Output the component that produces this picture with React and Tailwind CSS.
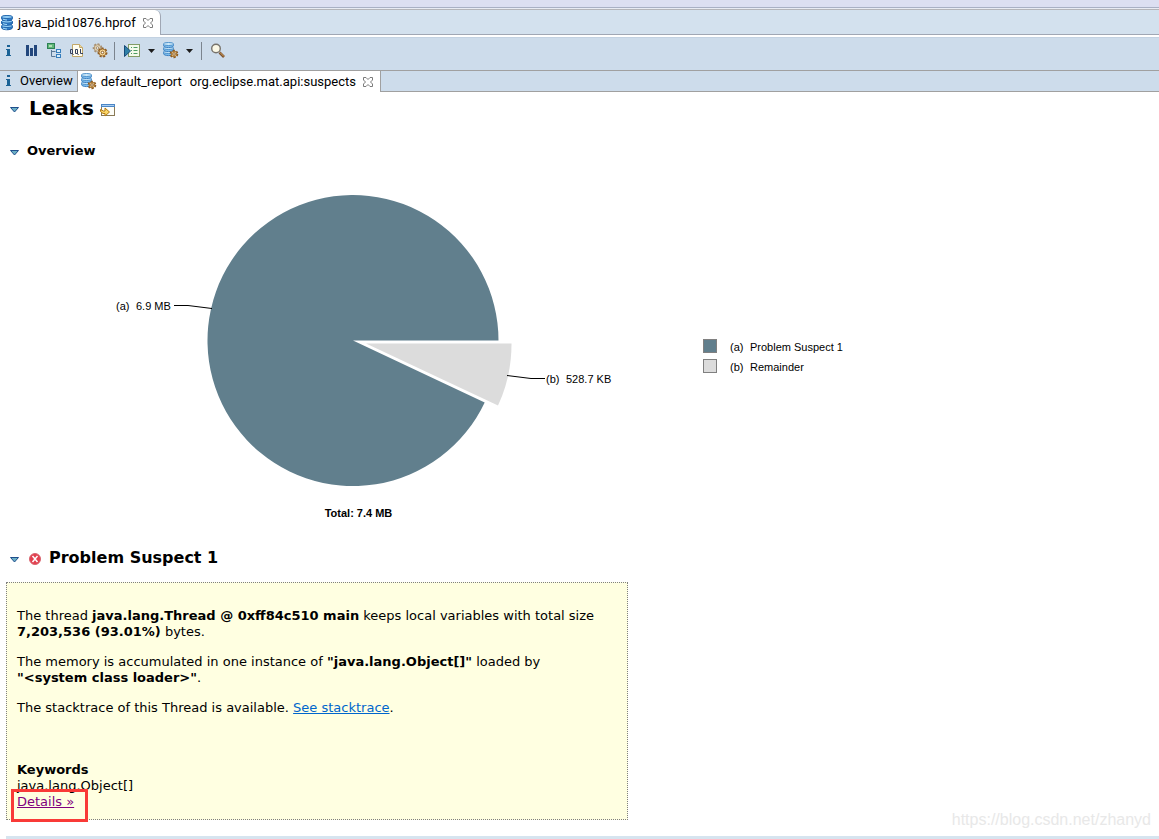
const uiFont = 'font-[Roboto,sans-serif]';

function DatabaseIcon() {
  return (
    <svg width="14" height="16" viewBox="0 0 14 16" className="shrink-0">
      {[11, 6.5, 2].map((y) => (
        <g key={y}>
          <path d={`M1.5 ${y}v1.500c0 3 11 3 11 0v-1.500z`} fill="#2f7ecb" stroke="#1d5fa6" />
          <ellipse cx="7" cy={y} rx="5.5" ry="1.600" fill="#8fcbf4" stroke="#2468ae" />
          <path d={`M3 ${y + 2.2}q2 .8 4 .8`} fill="none" stroke="#a8dcfa" />
        </g>
      ))}
    </svg>
  );
}

function InfoIcon() {
  return (
    <svg width="16" height="16" viewBox="0 0 16 16" className="shrink-0">
      <path d="M7 2h3v2H7zM6 6h4v6h1v1H6v-1h1V7H6z" fill="#1b6295" />
    </svg>
  );
}

function HistogramIcon() {
  return (
    <svg width="16" height="16" viewBox="0 0 16 16" className="shrink-0">
      <path d="M3 2h3v11H3zM7 5h3v8H7zM11 2h3v11h-3z" fill="#23477c" />
    </svg>
  );
}

function TreeIcon() {
  return (
    <svg width="16" height="16" viewBox="0 0 16 16" className="shrink-0">
      <path d="M5.500 7v6.500h4M5.500 8.500h4" fill="none" stroke="#5b7896" />
      <rect x="1.500" y="0.500" width="7" height="5" fill="#60b777" stroke="#2e8155" />
      <path d="M3 2h3v2H3z" fill="#b2dfb7" />
      <rect x="10.500" y="6.500" width="4" height="3" fill="#d9edfb" stroke="#357ebd" />
      <rect x="10.500" y="11.500" width="4" height="3" fill="#d9edfb" stroke="#357ebd" />
    </svg>
  );
}

function OqlIcon() {
  return (
    <svg width="16" height="16" viewBox="0 0 16 16" className="shrink-0">
      <path d="M3.500 1.500h7l3 3v9h-10z" fill="#fffdf0" stroke="#c2a768" />
      <path d="M10.500 1.500v3h3" fill="#ecd8a0" stroke="#c2a768" />
      <path
        d="M1.500 6.500h2v4h-2zM6.500 6.500h2v4h-2zM11.500 6v4.500h2.500M3 10l1.500 2M8 10l1.500 2"
        fill="none"
        stroke="#39435e"
      />
    </svg>
  );
}

function Gear({ x, y, r }) {
  return (
    <g transform={`translate(${x} ${y})`}>
      <circle r={r} fill="none" stroke="#8c5a20" strokeWidth="2" strokeDasharray="2 1.500" />
      <circle r={r - 0.5} fill="#f6d898" stroke="#a16d2b" />
      <circle r="1.300" fill="#fff" stroke="#8c5a20" />
    </g>
  );
}

function GearsIcon() {
  return (
    <svg width="16" height="16" viewBox="0 0 16 16" className="shrink-0">
      <g opacity="0.6">
        <Gear x={5.5} y={5} r={3.8} />
      </g>
      <Gear x={10.5} y={9.5} r={4} />
    </svg>
  );
}

function RunReportIcon() {
  return (
    <svg width="18" height="16" viewBox="0 0 18 16" className="shrink-0">
      <rect x="5.500" y="1.500" width="11" height="12" fill="#f4faeb" stroke="#839c66" />
      <path d="M8 4.500h1M8 7.500h1M8 10.500h1M10.500 4.500h4M10.500 7.500h4M10.500 10.500h4" stroke="#4c9c63" />
      <path d="M1.500 2.500v11l6-5.500z" fill="#2f80a7" stroke="#174a78" />
    </svg>
  );
}

function DatabaseGearIcon() {
  return (
    <svg width="17" height="17" viewBox="0 0 17 17" className="shrink-0">
      {[10, 6, 2].map((y) => (
        <g key={y}>
          <path d={`M1.500 ${y}v1.500c0 2.800 10 2.800 10 0v-1.500z`} fill="#7dbcec" stroke="#3f82c2" />
          <ellipse cx="6.500" cy={y} rx="5" ry="1.500" fill="#cde9fa" stroke="#4b90ca" />
        </g>
      ))}
      <Gear x={12} y={12} r={3.3} />
    </svg>
  );
}

function SearchIcon() {
  return (
    <svg width="16" height="16" viewBox="0 0 16 16" className="shrink-0">
      <path d="M9.500 9.500l4.500 4.500" stroke="#7a5230" strokeWidth="2.600" />
      <path d="M10 9.500l4 4" stroke="#d9a45c" />
      <circle cx="6" cy="5.500" r="4.300" fill="#fbf8e6" stroke="#77736c" strokeWidth="1.400" />
    </svg>
  );
}

function CloseIcon() {
  return (
    <svg width="12" height="12" viewBox="0 0 12 12" className="shrink-0">
      <path
        d="M1.500 1.500h2.500l2 2 2-2h2.500v2.500l-2 2 2 2v2.500h-2.500l-2-2-2 2h-2.500v-2.500l2-2-2-2z"
        fill="#fff"
        stroke="#7b7b7b"
      />
    </svg>
  );
}

function OpenPaneIcon() {
  return (
    <svg width="16" height="13" viewBox="0 0 16 13" className="shrink-0">
      <rect x="1.500" y="0.500" width="13" height="11" fill="#fdfdf8" stroke="#8a7a56" />
      <path d="M1 0h14v3H1z" fill="#4b86c6" />
      <path d="M2 1h12v1H2z" fill="#a9cdf0" />
      <path d="M0.500 5.500l3 1.500h1.500v-3l4.500 4-4.500 4v-2.500h-2l-2.500-2z" fill="#fbd667" stroke="#b27a14" />
    </svg>
  );
}

function ErrorIcon() {
  return (
    <svg width="12" height="12" viewBox="0 0 12 12" className="shrink-0">
      <circle cx="6" cy="6" r="5.500" fill="#e2404f" stroke="#d8656f" />
      <path d="M3.500 3l5 6M8.500 3l-5 6" stroke="#fff" strokeWidth="1.500" />
    </svg>
  );
}

function Twistie({ label }) {
  return (
    <button type="button" aria-label={label} className="flex w-[9px] shrink-0 pt-1">
      <svg width="9" height="6" viewBox="0 0 9 6">
        <path d="M0.500 0.500h8l-4 4.500z" fill="#6bb0c4" stroke="#1e4e8c" />
      </svg>
    </button>
  );
}

function ToolButton({ label, children }) {
  return (
    <button type="button" aria-label={label} className="flex shrink-0 items-center">
      {children}
    </button>
  );
}

function MenuArrow({ label }) {
  return (
    <ToolButton label={label}>
      <svg width="7" height="4" viewBox="0 0 7 4">
        <path d="M0 0h7l-3.500 4z" fill="#1c1c1c" />
      </svg>
    </ToolButton>
  );
}

function Toolbar() {
  return (
    <div className="flex h-[33px] items-center border-t border-[#c3d2e2] bg-[#cddceb] pb-[7px]">
      <div className="flex items-center gap-[7px]">
        <ToolButton label="Overview"><InfoIcon /></ToolButton>
        <ToolButton label="Histogram"><HistogramIcon /></ToolButton>
        <ToolButton label="Dominator tree"><TreeIcon /></ToolButton>
        <ToolButton label="OQL"><OqlIcon /></ToolButton>
        <ToolButton label="Thread overview"><GearsIcon /></ToolButton>
      </div>
      <span className="mx-[6px] h-[18px] w-px bg-[#7b848e]" />
      <div className="flex items-center gap-[7px] pl-[2px]">
        <ToolButton label="Run report"><RunReportIcon /></ToolButton>
        <MenuArrow label="Run report menu" />
        <ToolButton label="Query browser"><DatabaseGearIcon /></ToolButton>
        <MenuArrow label="Query browser menu" />
      </div>
      <span className="mx-2 h-[18px] w-px bg-[#7b848e]" />
      <ToolButton label="Find object"><SearchIcon /></ToolButton>
    </div>
  );
}

function EditorTabs() {
  return (
    <div className="flex h-[25px] bg-[#d3e1ee]">
      <div className="flex items-center rounded-tr-md border-r border-[#a0a7b4] bg-white pr-[6px]">
        <DatabaseIcon />
        <button type="button" className="mr-[6px] ml-1">java_pid10876.hprof</button>
        <ToolButton label="Close java_pid10876.hprof"><CloseIcon /></ToolButton>
      </div>
      <div className="flex-1 border-b border-[#a0a7b4]" />
    </div>
  );
}

function PageTabs() {
  return (
    <div className="flex h-[22px] border-t border-[#a0a0a0] bg-[#cddceb]">
      <button type="button" className="flex items-center gap-1 border-r border-b border-[#a0a0a0] pr-1">
        <InfoIcon />
        Overview
      </button>
      <div className="flex items-center border-r border-[#a0a0a0] bg-white pr-[6px] pl-[2px]">
        <DatabaseGearIcon />
        <button type="button" className="mr-[6px] ml-1 flex gap-2">
          <span>default_report</span>
          <span>org.eclipse.mat.api:suspects</span>
        </button>
        <ToolButton label="Close report"><CloseIcon /></ToolButton>
      </div>
      <div className="flex-1 border-b border-[#a0a0a0]" />
    </div>
  );
}

const legend = [
  { id: '(a)', name: 'Problem Suspect 1', swatch: 'bg-[#617f8d]' },
  { id: '(b)', name: 'Remainder', swatch: 'bg-[#dcdcdc]' },
];

function PieChart() {
  return (
    <div className="flex items-start font-['Liberation_Sans',sans-serif] text-[11px] leading-[14px] text-black">
      <svg width="640" height="350" viewBox="0 0 640 350" className="shrink-0">
        <path d="M353 165.500L498.500 165.500A145.500 145.500 0 1 0 484.700 227.400Z" fill="#617f8d" />
        <path d="M366 168.500L511.500 168.500A145.500 145.500 0 0 1 498 230.500Z" fill="#dcdcdc" />
        <path d="M174 130.500H188L212 133.500M507 200.500L531 203.500H545" fill="none" stroke="#000" />
        <text x="116" y="135">(a)</text>
        <text x="136" y="135">6.9 MB</text>
        <text x="546" y="208">(b)</text>
        <text x="566" y="208">528.7 KB</text>
        <text x="358.500" y="342" textAnchor="middle" fontWeight="bold">Total: 7.4 MB</text>
      </svg>
      <ul className="mt-[164px] ml-[63px] flex flex-col gap-[5px]">
        {legend.map((item) => (
          <li key={item.id} className="flex items-start">
            <span className={`h-[14px] w-[14px] border border-[#808080] ${item.swatch}`} />
            <span className="ml-[13px] w-5 pt-px">{item.id}</span>
            <span className="pt-px">{item.name}</span>
          </li>
        ))}
      </ul>
    </div>
  );
}

function SuspectDetails() {
  return (
    <div className="mx-[6px] max-w-[622px] border border-dotted border-[#808080] bg-[#ffffe1] px-[10px] pt-[25px] pb-[9px]">
      <p className="mb-[14px]">
        The thread <b>java.lang.Thread @ 0xff84c510 main</b> keeps local variables with total size{' '}
        <b>7,203,536 (93.01%)</b> bytes.
      </p>
      <p className="mb-[14px]">
        The memory is accumulated in one instance of <b>"java.lang.Object[]"</b> loaded by{' '}
        <b className="inline-block">"&lt;system class loader&gt;"</b>.
      </p>
      <p className="mb-[46px]">
        The stacktrace of this Thread is available.{' '}
        <a href="#stacktrace" className="text-[#0066cc] underline">See stacktrace</a>.
      </p>
      <p className="font-bold">Keywords</p>
      <p>java.lang.Object[]</p>
      <div className="relative w-fit">
        <a href="#details" className="text-[#800080] underline">Details »</a>
        <span className="pointer-events-none absolute -top-[5px] -right-[14px] -bottom-3 -left-[6px] border-3 border-[#f93a37]" />
      </div>
    </div>
  );
}

export default function App() {
  return (
    <div className="relative bg-white text-black">
      <header className={`${uiFont} text-[13px] leading-4`}>
        <div className="h-2 border-b border-[#a9b0c4] bg-[#dcdff1]" />
        <div className="h-[2px] border-b border-[#b4b4b8] bg-[#e8ebf3]" />
        <EditorTabs />
        <div className="h-[2px] bg-white" />
        <Toolbar />
        <PageTabs />
      </header>

      <main className="font-['DejaVu_Sans',sans-serif] text-[13px] leading-4">
        <div className="flex h-8 items-center pl-[10px]">
          <Twistie label="Collapse Leaks" />
          <h1 className="mr-[6px] ml-[10px] text-[20px] leading-6 font-bold">Leaks</h1>
          <span className="pt-1"><OpenPaneIcon /></span>
        </div>
        <div className="mt-[19px] flex h-4 items-center pl-[10px]">
          <Twistie label="Collapse Overview" />
          <h2 className="ml-2 font-bold">Overview</h2>
        </div>
        <div className="mt-4">
          <PieChart />
        </div>
        <div className="mt-[23px] mb-[14px] flex h-5 items-center pl-[10px]">
          <Twistie label="Collapse Problem Suspect 1" />
          <span className="ml-[10px] pt-px"><ErrorIcon /></span>
          <h2 className="ml-2 text-[16px] leading-5 font-bold">Problem Suspect 1</h2>
        </div>
        <SuspectDetails />
        <div className="mt-4 ml-[6px] h-[3px] bg-[#d6e4ef]" />
      </main>

      <div className="absolute right-2 bottom-[9px] font-['Liberation_Sans',sans-serif] text-[16px] leading-5 text-[#e8e8e8]">
        https://blog.csdn.net/zhanyd
      </div>
    </div>
  );
}
